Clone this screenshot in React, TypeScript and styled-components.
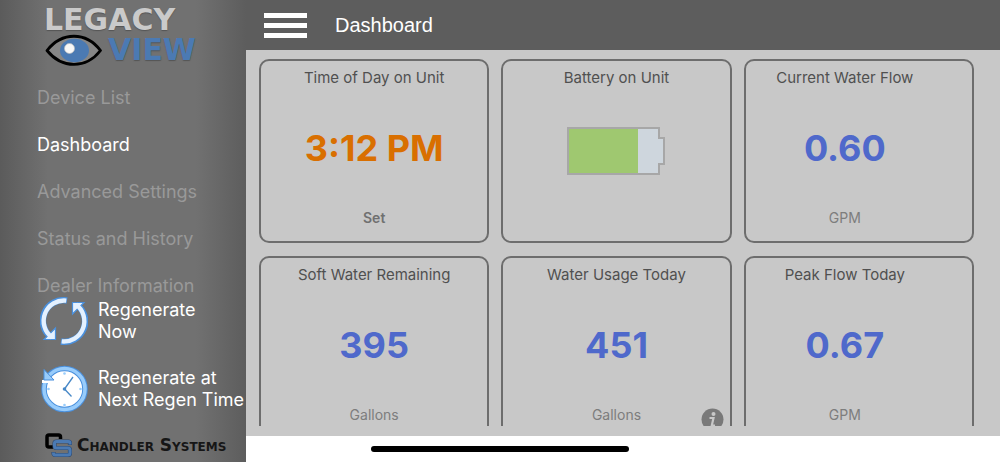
import React from "react";
import styled, { createGlobalStyle } from "styled-components";

const Global = createGlobalStyle`
  *, *::before, *::after { box-sizing: border-box; }
  body { margin: 0; background: #fff; font-family: Inter, "Liberation Sans", sans-serif; }
  button { font: inherit; color: inherit; background: none; border: 0; padding: 0; cursor: pointer; }
  h1, h2, p { margin: 0; font-weight: 400; }
  svg { display: block; }
`;

const Shell = styled.div`
  display: flex;
  height: 100vh;
`;

const Sidebar = styled.aside`
  flex: 0 0 246px;
  display: flex;
  flex-direction: column;
  background: linear-gradient(90deg, #5b5b5b 0, #717171 48px, #717171 196px, #5d5d5d 100%);
  overflow: hidden;
`;

const Brand = styled.div`
  flex: none;
  padding: 6px 0 0 44px;
  font-family: "DejaVu Sans", sans-serif;
  font-size: 30px;
  font-weight: 700;
  line-height: 28px;
  color: #cacaca;
  text-shadow: 0 1px 1px #555;
`;

const BrandRow = styled.div`
  display: flex;
  align-items: center;
  gap: 6px;
  color: #4b7ab3;
`;

const Nav = styled.nav`
  flex: 1;
  min-height: 0;
  padding-top: 8px;
`;

const NavLink = styled.a<{ $active?: boolean }>`
  display: block;
  padding-left: 37px;
  font-size: 18px;
  line-height: 47px;
  text-decoration: none;
  color: ${(p) => (p.$active ? "#fff" : "#999")};
`;

const Actions = styled.div`
  flex: none;
  display: flex;
  flex-direction: column;
  gap: 20px;
  padding-left: 40px;
`;

const Action = styled.button`
  display: flex;
  align-items: center;
  gap: 10px;
  height: 48px;
  text-align: left;
  white-space: pre-line;
  font-size: 18px;
  line-height: 22px;
  color: #fff;
`;

const Maker = styled.div`
  flex: none;
  display: flex;
  align-items: center;
  gap: 5px;
  height: 49px;
  padding: 14px 0 0 44px;
  font-family: "DejaVu Sans", sans-serif;
  font-variant: small-caps;
  font-weight: 700;
  font-size: 17px;
  line-height: 16px;
  white-space: nowrap;
  color: #161616;
`;

const Main = styled.main`
  flex: 1;
  min-width: 0;
  display: flex;
  flex-direction: column;
  background: #c8c8c8;
`;

const Header = styled.header`
  flex: none;
  display: flex;
  align-items: center;
  gap: 28px;
  height: 50px;
  padding: 0 18px;
  background: #5d5d5d;
  color: #fff;
`;

const MenuButton = styled.button`
  display: flex;
  flex-direction: column;
  gap: 5px;
  width: 43px;
`;

const MenuBar = styled.span`
  height: 5px;
  background: #fff;
`;

const Title = styled.h1`
  font-family: "Liberation Sans", sans-serif;
  font-size: 20px;
  line-height: 24px;
`;

const Viewport = styled.div`
  flex: 1;
  min-height: 0;
  overflow: hidden;
  margin: 9px 26px 10px 13px;
`;

const Grid = styled.div`
  display: grid;
  grid-template-columns: repeat(3, 1fr);
  gap: 13px 12px;
`;

const Card = styled.section<{ $inset?: boolean }>`
  position: relative;
  display: flex;
  flex-direction: column;
  align-items: center;
  justify-content: space-between;
  height: 184px;
  padding: 7px ${(p) => (p.$inset ? 28 : 0)}px 13px 0;
  border: 2px solid #6d6d6d;
  border-radius: 10px;
`;

const CardTitle = styled.h2`
  font-size: 15px;
  line-height: 20px;
  color: #505050;
`;

const Value = styled.p<{ $accent?: boolean }>`
  font-size: 36px;
  font-weight: 700;
  line-height: 48px;
  color: ${(p) => (p.$accent ? "#d96f00" : "#4f69cb")};
`;

const Unit = styled.p<{ $strong?: boolean }>`
  height: 20px;
  font-size: 14px;
  font-weight: ${(p) => (p.$strong ? 600 : 400)};
  line-height: 20px;
  color: ${(p) => (p.$strong ? "#707070" : "#7d7d7d")};
`;

const InfoButton = styled.button`
  position: absolute;
  right: 6px;
  bottom: 7px;
`;

const HomeStrip = styled.footer`
  flex: none;
  height: 26px;
  background: #fff;
`;

const HomeIndicator = styled.div`
  position: fixed;
  left: 0;
  right: 0;
  bottom: 10px;
  width: 258px;
  height: 6px;
  margin: 0 auto;
  border-radius: 3px;
  background: #000;
`;

const EyeLogo = () => (
  <svg width="58" height="32" viewBox="0 0 58 32" aria-hidden="true">
    <path d="M3 16.500C18-2.500 42-2.500 56.500 16.500C42 35 18 35 3 16.500Z" fill="#868686" stroke="#000" strokeWidth="2.800" strokeLinejoin="round" />
    <ellipse cx="30.500" cy="16.500" rx="14.500" ry="11.800" fill="#4b7ab3" />
    <circle cx="25.500" cy="14.500" r="5" fill="#f8f8f8" stroke="#bdbdbd" strokeWidth=".7" />
  </svg>
);

const CycleHalf = () => (
  <>
    <path d="M27 3.500A20.500 20.500 0 0 0 11 40" fill="none" stroke="#4a90dd" strokeWidth="6.400" />
    <path d="M4 42.500H15.500V31Z" fill="#e4f1ff" stroke="#4a90dd" strokeWidth="1.200" />
    <path d="M26.300 3.600A20.500 20.500 0 0 0 12 40.500" fill="none" stroke="#e4f1ff" strokeWidth="4.400" />
  </>
);

const CycleIcon = () => (
  <svg width="48" height="48" viewBox="0 0 48 48" aria-hidden="true">
    <CycleHalf />
    <g transform="rotate(180 24 24)"><CycleHalf /></g>
  </svg>
);

const ClockIcon = () => (
  <svg width="48" height="48" viewBox="0 0 48 48" aria-hidden="true">
    <circle cx="24.500" cy="24" r="20.500" fill="#fff" stroke="#4a90dd" strokeWidth="5.600" />
    <circle cx="24.500" cy="24" r="20.500" fill="none" stroke="#98ccfb" strokeWidth="3.600" />
    <path d="M2 16.500H10" stroke="#fff" strokeWidth="3" />
    <path d="M4 4.500V15H14Z" fill="#98ccfb" stroke="#4a90dd" />
    <path d="M24.500 24L33 12M24.500 24L31.500 31.500" stroke="#4788c7" strokeWidth="1.300" />
    <circle cx="24.500" cy="24" r="1.800" fill="#4788c7" />
    <g fill="#98ccfb">
      <circle cx="24.500" cy="8.500" r="1.300" /><circle cx="24.500" cy="40" r="1.300" />
      <circle cx="8.500" cy="24" r="1.300" /><circle cx="40.500" cy="24" r="1.300" />
    </g>
  </svg>
);

const MakerLogo = () => (
  <svg width="28" height="26" viewBox="0 0 28 26" aria-hidden="true" fill="none">
    <path d="M16.500 7V5Q16.500 3 14.500 3H5Q3 3 3 5V13Q3 15 5 15H9" stroke="#000" strokeWidth="3.500" />
    <g id="maker-s">
      <path d="M26 13V11Q26 9.500 24.500 9.500H12.500Q10.500 9.500 10.500 11.500V14Q10.500 16 12.500 16H24Q26 16 26 18V21Q26 23 24 23H11Q9.500 23 9.500 21V20" stroke="#2f4a70" strokeWidth="4.200" />
      <path d="M26 12.500V11Q26 9.500 24.500 9.500H12.500Q10.500 9.500 10.500 11.500V14Q10.500 16 12.500 16H24Q26 16 26 18V21Q26 23 24 23H11Q9.500 23 9.500 21V20.500" stroke="#4b7ab3" strokeWidth="3" />
    </g>
  </svg>
);

const Battery = () => (
  <svg width="100" height="56" viewBox="0 -6 100 56" role="img" aria-label="Battery level">
    <path d="M2 2H93V12H98V38H93V48H2Z" fill="#ced6dd" stroke="#a7a7a7" strokeWidth="2" />
    <path d="M3 3H72V47H3Z" fill="#9fc870" />
  </svg>
);

const InfoIcon = () => (
  <svg width="23" height="23" viewBox="0 0 23 23" aria-hidden="true">
    <circle cx="11.500" cy="11.500" r="11" fill="#797979" />
    <circle cx="12.500" cy="6" r="2" fill="#c8c8c8" />
    <path d="M8.500 10H12.500L10.800 17.500H14" fill="none" stroke="#c8c8c8" strokeWidth="2.200" />
  </svg>
);

const navItems = ["Device List", "Dashboard", "Advanced Settings", "Status and History", "Dealer Information"];

export default function App() {
  return (
    <Shell>
      <Global />
      <Sidebar>
        <Brand>
          <div>LEGACY</div>
          <BrandRow><EyeLogo /><span>VIEW</span></BrandRow>
        </Brand>
        <Nav>
          {navItems.map((item) => (
            <NavLink key={item} href="#" $active={item === "Dashboard"}>{item}</NavLink>
          ))}
        </Nav>
        <Actions>
          <Action type="button"><CycleIcon /><span>{"Regenerate\nNow"}</span></Action>
          <Action type="button"><ClockIcon /><span>{"Regenerate at\nNext Regen Time"}</span></Action>
        </Actions>
        <Maker><MakerLogo /><span>Chandler Systems</span></Maker>
      </Sidebar>
      <Main>
        <Header>
          <MenuButton type="button" aria-label="Menu"><MenuBar /><MenuBar /><MenuBar /></MenuButton>
          <Title>Dashboard</Title>
        </Header>
        <Viewport>
          <Grid>
            <Card>
              <CardTitle>Time of Day on Unit</CardTitle>
              <Value $accent>3:12 PM</Value>
              <Unit as="button" $strong>Set</Unit>
            </Card>
            <Card>
              <CardTitle>Battery on Unit</CardTitle>
              <Battery />
              <Unit />
            </Card>
            <Card $inset>
              <CardTitle>Current Water Flow</CardTitle>
              <Value>0.60</Value>
              <Unit>GPM</Unit>
            </Card>
            <Card>
              <CardTitle>Soft Water Remaining</CardTitle>
              <Value>395</Value>
              <Unit>Gallons</Unit>
            </Card>
            <Card>
              <CardTitle>Water Usage Today</CardTitle>
              <Value>451</Value>
              <Unit>Gallons</Unit>
              <InfoButton type="button" aria-label="Water usage information"><InfoIcon /></InfoButton>
            </Card>
            <Card $inset>
              <CardTitle>Peak Flow Today</CardTitle>
              <Value>0.67</Value>
              <Unit>GPM</Unit>
            </Card>
          </Grid>
        </Viewport>
        <HomeStrip />
      </Main>
      <HomeIndicator />
    </Shell>
  );
}
